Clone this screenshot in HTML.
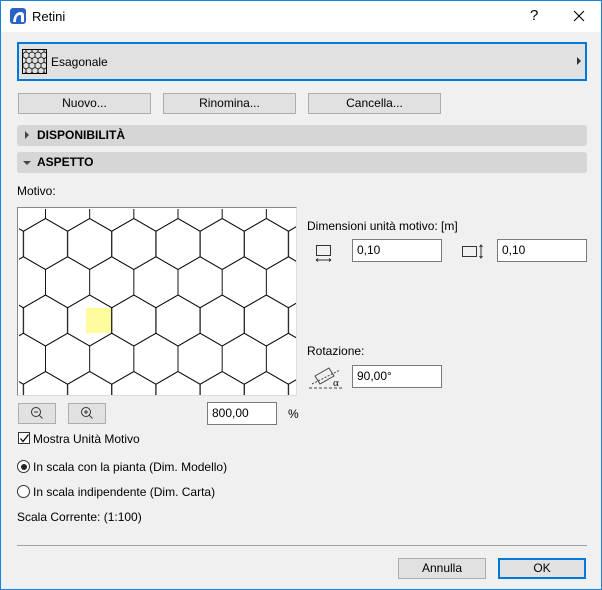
<!DOCTYPE html>
<html><head><style>
*{box-sizing:border-box;margin:0;padding:0}
body{width:602px;height:590px;overflow:hidden;font-family:"Liberation Sans",sans-serif;font-size:12px;color:#000;background:#f0f0f0}
.win{position:absolute;left:0;top:0;width:602px;height:590px;border:1px solid #1883d7;background:#f0f0f0}
.title{position:absolute;left:0;top:0;width:600px;height:31px;background:#fff}
.a{position:absolute}
.btn{position:absolute;background:#e1e1e1;border:1px solid #adadad;text-align:center;line-height:18px;font-size:12px}
.inp{position:absolute;background:#fff;border:1px solid #7a7a7a;padding-left:4px;line-height:21px;font-size:12px}
.sec{position:absolute;left:16px;width:570px;height:21px;background:#d6d6d6;border-radius:3px;font-weight:bold;font-size:12px;line-height:21px;padding-left:20px}
</style></head><body>
<div class="win">
<div class="title">
 <svg class="a" style="left:9px;top:7px" width="16" height="16" viewBox="0 0 16 16"><rect x="0" y="0" width="16" height="16" rx="3" fill="#2a63c8"/><path d="M3 14 Q4 4 11 4 Q14 4 14 8 L14 14 L11 14 L11 8 Q11 7 10 7 Q6 7 6 14Z" fill="#fff"/></svg>
 <div class="a" style="left:31px;top:8px;font-size:13px">Retini</div>
 <div class="a" style="left:529px;top:6px;font-size:15px">?</div>
 <svg class="a" style="left:572px;top:9px" width="12" height="12"><path d="M1 1L11 11M11 1L1 11" stroke="#000" stroke-width="1.1"/></svg>
</div>
<svg width="0" height="0" style="position:absolute"><defs>
<pattern id="hx" patternUnits="userSpaceOnUse" width="44.17" height="76.5" x="26.5" y="35">
<g fill="none" stroke="#000" stroke-width="0.9">
<path d="M0,-25.5 L22.08,-12.75 L22.08,12.75 L0,25.5 L-22.08,12.75 L-22.08,-12.75Z"/>
<path transform="translate(44.17,0)" d="M0,-25.5 L22.08,-12.75 L22.08,12.75 L0,25.5 L-22.08,12.75 L-22.08,-12.75Z"/>
<path transform="translate(22.08,38.25)" d="M0,-25.5 L22.08,-12.75 L22.08,12.75 L0,25.5 L-22.08,12.75 L-22.08,-12.75Z"/>
<path transform="translate(0,76.5)" d="M0,-25.5 L22.08,-12.75 L22.08,12.75 L0,25.5 L-22.08,12.75 L-22.08,-12.75Z"/>
<path transform="translate(44.17,76.5)" d="M0,-25.5 L22.08,-12.75 L22.08,12.75 L0,25.5 L-22.08,12.75 L-22.08,-12.75Z"/>
</g></pattern>
<pattern id="hs" patternUnits="userSpaceOnUse" width="6" height="10.4" x="1" y="1">
<g fill="none" stroke="#000" stroke-width="0.8"><path d="M0,-3.5 L3,-1.7 L3,1.7 L0,3.5 L-3,1.7 L-3,-1.7Z M6,-3.5 L9,-1.7 L9,1.7 L6,3.5 L3,1.7 L3,-1.7Z M3,1.7 L6,3.5 L6,6.9 L3,8.7 L0,6.9 L0,3.5Z M0,6.9 L3,8.7 L3,12.1 L0,13.9 L-3,12.1 L-3,8.7Z M6,6.9 L9,8.7 L9,12.1 L6,13.9 L3,12.1 L3,8.7Z"/></g></pattern>
</defs></svg>
<div class="a" style="left:16px;top:41px;width:570px;height:39px;border:2px solid #0078d7;background:#e1e1e1"></div>
<svg class="a" style="left:21px;top:48px" width="25" height="25"><rect x="0.5" y="0.5" width="24" height="24" fill="url(#hs)" stroke="#000"/></svg>
<div class="a" style="left:50px;top:54px">Esagonale</div>
<div class="a" style="left:576px;top:56px;width:0;height:0;border-left:4px solid #333;border-top:4px solid transparent;border-bottom:4px solid transparent"></div>
<div class="btn" style="left:17px;top:92px;width:133px;height:21px">Nuovo...</div>
<div class="btn" style="left:162px;top:92px;width:133px;height:21px">Rinomina...</div>
<div class="btn" style="left:307px;top:92px;width:133px;height:21px">Cancella...</div>
<div class="sec" style="top:124px">DISPONIBILITÀ</div>
<div class="a" style="left:24px;top:130px;border-left:4px solid #444;border-top:4px solid transparent;border-bottom:4px solid transparent"></div>
<div class="sec" style="top:151px">ASPETTO</div>
<div class="a" style="left:22px;top:160px;border-top:4px solid #444;border-left:4px solid transparent;border-right:4px solid transparent"></div>
<div class="a" style="left:16px;top:183px">Motivo:</div>
<div class="a" style="left:16px;top:206px;width:280px;height:189px;border-top:1px solid #888;border-left:1px solid #888;border-right:1px solid #ddd;border-bottom:1px solid #ddd;background:#fff;overflow:hidden">
<div class="a" style="left:68px;top:100px;width:25px;height:25px;background:#fffc9e"></div>
<svg class="a" style="left:1px;top:1px" width="278" height="187"><rect width="278" height="187" fill="url(#hx)"/></svg>
</div>
<div class="btn" style="left:17px;top:402px;width:38px;height:21px"></div>
<div class="btn" style="left:67px;top:402px;width:38px;height:21px"></div>
<svg class="a" style="left:29px;top:405px" width="14" height="14"><circle cx="6" cy="6" r="4.5" fill="none" stroke="#333"/><path d="M4 6H8M9.3 9.3L12.5 12.5" stroke="#333"/></svg>
<svg class="a" style="left:79px;top:405px" width="14" height="14"><circle cx="6" cy="6" r="4.5" fill="none" stroke="#333"/><path d="M4 6H8M6 4V8M9.3 9.3L12.5 12.5" stroke="#333"/></svg>
<div class="inp" style="left:206px;top:401px;width:70px;height:23px">800,00</div>
<div class="a" style="left:287px;top:406px">%</div>
<div class="a" style="left:17px;top:431px;width:12px;height:12px;border:1px solid #333;background:#fff"></div>
<svg class="a" style="left:18px;top:432px" width="11" height="11"><path d="M1.5 5.5L4 8.5L9.5 1.5" fill="none" stroke="#000" stroke-width="1.2"/></svg>
<div class="a" style="left:32px;top:431px">Mostra Unità Motivo</div>
<div class="a" style="left:16px;top:459px;width:13px;height:13px;border:1px solid #333;border-radius:50%;background:#fff"></div>
<div class="a" style="left:19.5px;top:462.5px;width:6px;height:6px;border-radius:50%;background:#222"></div>
<div class="a" style="left:32px;top:459px">In scala con la pianta (Dim. Modello)</div>
<div class="a" style="left:16px;top:484px;width:13px;height:13px;border:1px solid #333;border-radius:50%;background:#fff"></div>
<div class="a" style="left:32px;top:484px">In scala indipendente (Dim. Carta)</div>
<div class="a" style="left:16px;top:509px">Scala Corrente: (1:100)</div>
<div class="a" style="left:306px;top:218px">Dimensioni unità motivo: [m]</div>
<svg class="a" style="left:313px;top:242px" width="20" height="20"><rect x="2.5" y="2.5" width="14" height="10" fill="none" stroke="#333"/><path d="M2 17H17M2 17L4 15.5M2 17L4 18.5M17 17L15 15.5M17 17L15 18.5" stroke="#333" fill="none"/></svg>
<div class="inp" style="left:351px;top:238px;width:90px;height:23px">0,10</div>
<svg class="a" style="left:460px;top:241px" width="26" height="18"><rect x="1.5" y="4.5" width="14" height="10" fill="none" stroke="#333"/><path d="M20 3V16M18.5 5L20 3L21.5 5M18.5 14L20 16L21.5 14" stroke="#333" fill="none"/></svg>
<div class="inp" style="left:496px;top:238px;width:90px;height:23px">0,10</div>
<div class="a" style="left:306px;top:343px">Rotazione:</div>
<svg class="a" style="left:307px;top:361px" width="36" height="28"><path d="M7 14L21 6L26 14L12 22Z" fill="none" stroke="#444"/><path d="M4 22L32 8" stroke="#444" stroke-dasharray="2,1.5"/><path d="M1 26H34" stroke="#444" stroke-dasharray="3,2"/><text x="25" y="24" font-size="11" font-family="Liberation Serif">α</text></svg>
<div class="inp" style="left:351px;top:364px;width:90px;height:23px">90,00°</div>
<div class="a" style="left:16px;top:544px;width:570px;height:1px;background:#a0a0a0"></div>
<div class="btn" style="left:397px;top:557px;width:88px;height:21px">Annulla</div>
<div class="btn" style="left:497px;top:557px;width:88px;height:21px;border:2px solid #0078d7;line-height:17px">OK</div>
</div>
</body></html>
